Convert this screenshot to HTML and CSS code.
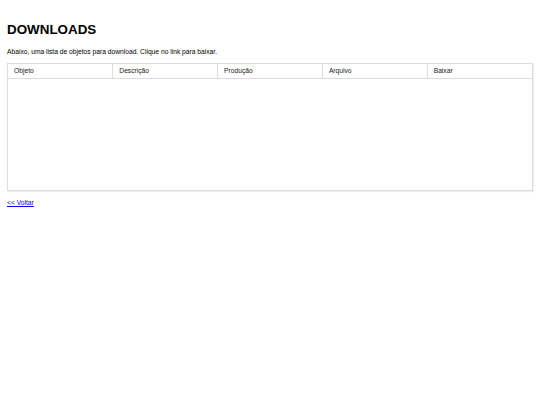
FILE: index.html
```html
<!DOCTYPE html>
<html lang="pt">
<head>
<meta charset="utf-8">
<title>Downloads</title>
<link rel="stylesheet" href="styles.css">
</head>
<body>
<h1 class="title">DOWNLOADS</h1>
<p class="intro">Abaixo, uma lista de objetos para download. Clique no link para baixar.</p>
<div class="table-wrap">
<table class="downloads">
<thead>
<tr><th>Objeto</th><th>Descrição</th><th>Produção</th><th>Arquivo</th><th>Baixar</th></tr>
</thead>
<tbody></tbody>
</table>
</div>
<a class="back" href="#">&lt;&lt; Voltar</a>
</body>
</html>
```
FILE: styles.css
```css
html, body { margin: 0; padding: 0; background: #fff; }
body {
  padding: 0 7px;
  font-family: "Liberation Sans", Arial, sans-serif;
  color: #000;
}
.title {
  margin: 0;
  padding-top: 22px;
  font-size: 13.4px;
  line-height: 16px;
  font-weight: bold;
}
.intro {
  margin: 10px 0 0;
  font-size: 6.7px;
  line-height: 8px;
}
.table-wrap {
  margin-top: 7px;
  height: 126px;
  border: 1px solid #dcdcdc;
  box-shadow: 1px 1px 1px #eee;
}
.downloads {
  width: 100%;
  border-collapse: collapse;
  table-layout: fixed;
}
.downloads th {
  text-align: left;
  font-weight: normal;
  font-size: 6.7px;
  line-height: 8px;
  padding: 3px 6px 3px;
  border-left: 1px solid #dcdcdc;
  border-bottom: 1px solid #dcdcdc;
  color: #222;
  height: 8px;
}
.downloads th:first-child { border-left: none; }
.back {
  display: inline-block;
  margin-top: 4px;
  font-size: 6.7px;
  line-height: 8px;
  color: #00e;
}
```
